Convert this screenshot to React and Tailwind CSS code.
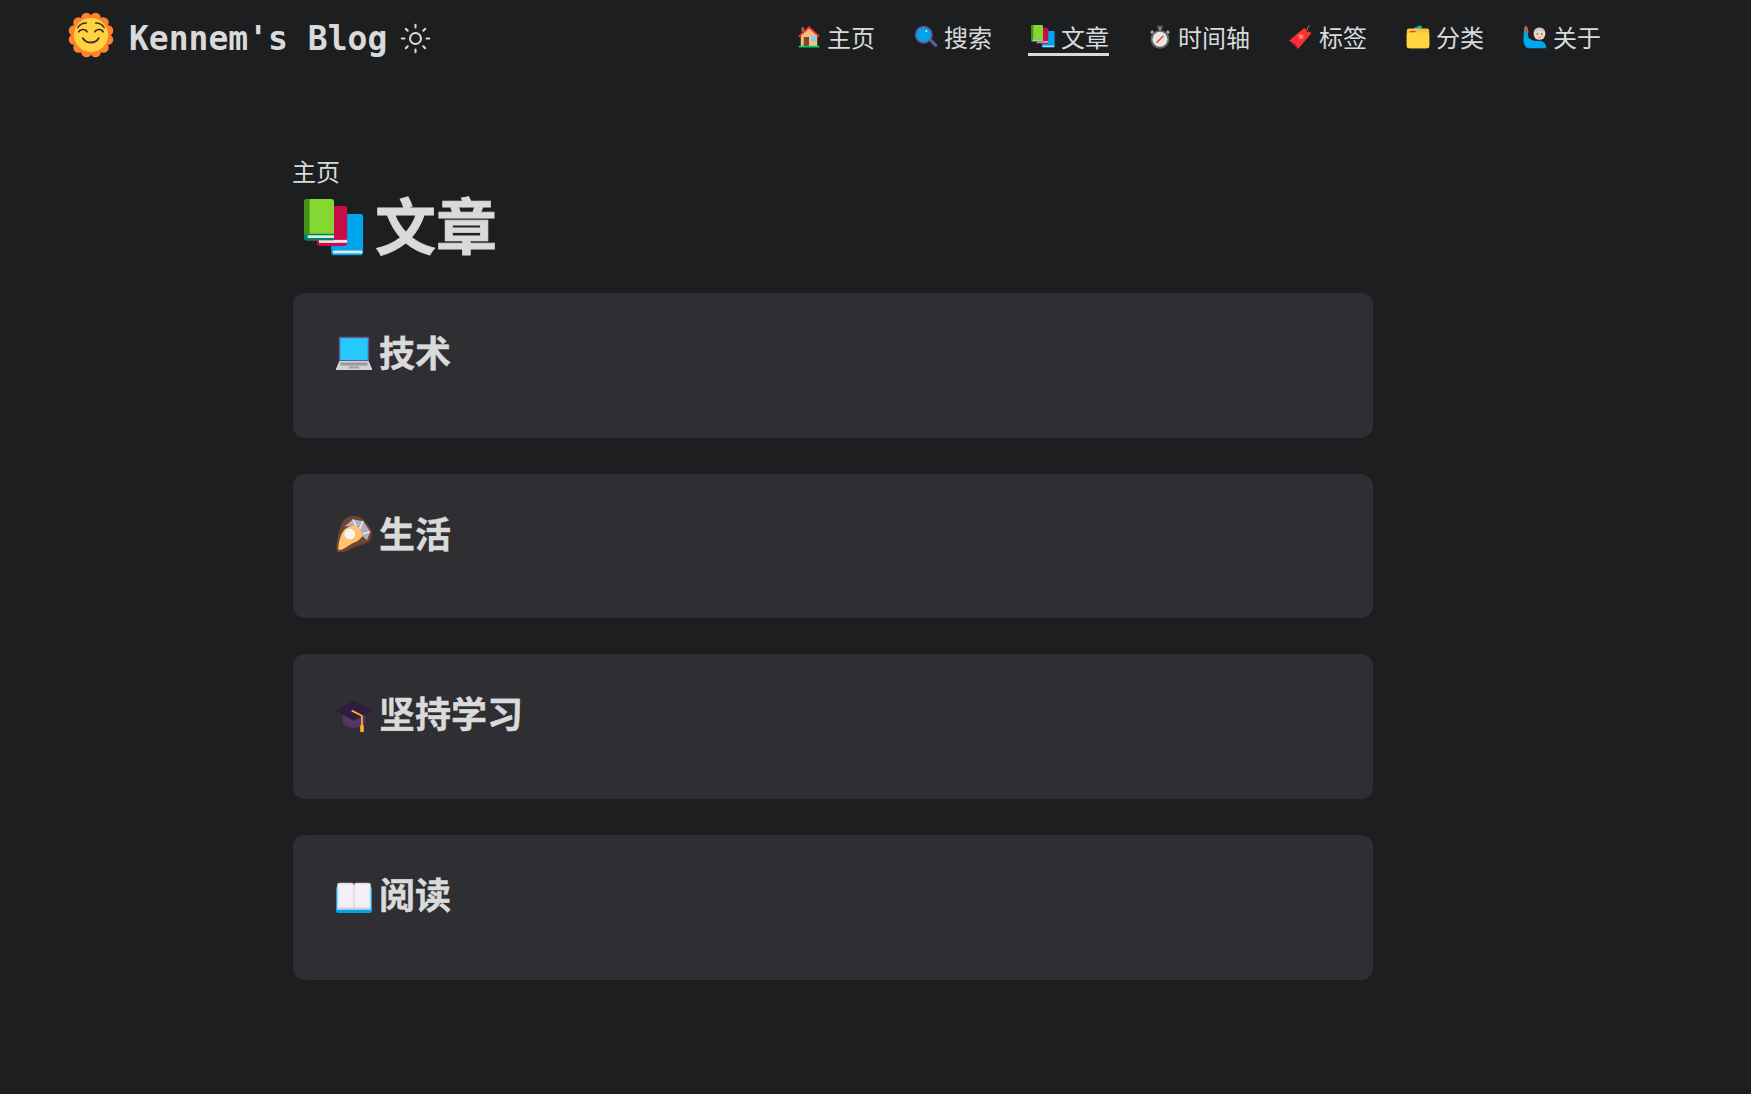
import React from "react";
import { Sun } from "lucide-react";

const cjk = { fontFamily: '"Noto Sans CJK SC", sans-serif' };

const I = ({ s = 24, children, className = "" }) => (
  <svg width={s} height={s} viewBox="0 0 32 32" fill="none" className={"shrink-0 " + className}>{children}</svg>
);

const SunFace = ({ s }) => (
  <I s={s}>
    {Array.from({ length: 12 }).map((_, i) => {
      const a = (i * Math.PI) / 6 + Math.PI / 12;
      return <circle key={i} cx={16 + 12.2 * Math.cos(a)} cy={16 + 12.2 * Math.sin(a)} r="3.7" fill="#FF822D" />;
    })}
    <circle cx="16" cy="16" r="13" fill="#FF822D" />
    <circle cx="16" cy="16" r="11.9" fill="#FFD33D" />
    <path d="M6.800 10.900C8 8.900 10.500 7.700 12.800 7.700M25.200 10.900C24 8.900 21.500 7.700 19.200 7.700" stroke="#402A32" strokeWidth="1" strokeLinecap="round" />
    <path d="M7.500 13.800c1-2.200 4.800-2.200 5.800 0M18.700 13.800c1-2.200 4.800-2.200 5.800 0" stroke="#402A32" strokeWidth="1.100" strokeLinecap="round" />
    <path d="M10.400 18.200c2.500 4 8.500 4 10.900 0" stroke="#402A32" strokeWidth="1.300" strokeLinecap="round" />
  </I>
);

const House = ({ s }) => (
  <I s={s}>
    <path d="M5 13L16 4l11 9v15H5z" fill="#F3C07B" />
    <path d="M2.500 15.500L16 3l13.500 12.500" stroke="#F8312F" strokeWidth="2.400" />
    <rect x="6" y="3" width="3.500" height="6" fill="#A56953" />
    <rect x="9" y="16" width="7" height="12" fill="#7D4533" />
    <rect x="19" y="15" width="6.500" height="6.500" fill="#83CBFF" />
    <rect x="2" y="27.500" width="28" height="2.500" rx="1.200" fill="#00D26A" />
  </I>
);

const Magnifier = ({ s }) => (
  <I s={s}>
    <path d="M20 21l3-3 7.500 7.500a2.100 2.100 0 01-3 3z" fill="#635994" />
    <circle cx="13" cy="13" r="12" fill="#635994" />
    <circle cx="13" cy="13" r="9.600" fill="#00A6ED" />
    <circle cx="16.500" cy="8" r="1.300" fill="#F4F4F4" />
  </I>
);

const Books = ({ s }) => (
  <I s={s}>
    <rect x="14.500" y="8" width="17" height="22" rx="1.300" fill="#00A6ED" />
    <rect x="15.500" y="27.500" width="15.500" height="1.500" fill="#E6E6E6" />
    <rect x="7" y="3.700" width="16" height="21.300" rx="1.300" fill="#CA0B4A" />
    <rect x="8" y="21.800" width="15" height="1.600" fill="#E6E6E6" />
    <rect x="0" y="0" width="16" height="22" rx="1.500" fill="#86D72F" />
    <path d="M0 1.500A1.500 1.500 0 011.500 0H3v18.500H0z" fill="#44911B" />
    <path d="M0 18.500h16v1H2v1.200h14V22H1.500A1.500 1.500 0 010 20.500z" fill="#008463" />
    <rect x="2" y="19.400" width="14" height="1.400" fill="#E6E6E6" />
  </I>
);

const Stopwatch = ({ s }) => (
  <I s={s}>
    <rect x="12.500" y="1" width="7" height="4" rx="1" fill="#636363" />
    <rect x="14.500" y="4" width="3" height="4" fill="#9B9B9B" />
    <path d="M2.500 9.500l3-3 3 3-3 3zM29.500 9.500l-3-3-3 3 3 3z" fill="#9B9B9B" />
    <circle cx="16" cy="19" r="12.500" fill="#636363" />
    <circle cx="16" cy="19" r="10" fill="#E6E6E6" />
    <path d="M12 23l8-8" stroke="#F8312F" strokeWidth="2" strokeLinecap="round" />
  </I>
);

const Ticket = ({ s }) => (
  <I s={s}>
    <path d="M0 21L20 4l10 7-18 21-3.500-6.500z" fill="#F8312F" />
    <path d="M0 21l8.500 4.500L12 32z" fill="#CA0B4A" />
    <path d="M16 10.500l1.400 3 3.200.300-2.400 2.200.700 3.200-2.900-1.700-2.900 1.700.700-3.200-2.400-2.200 3.200-.300z" fill="#FF8687" />
    <path d="M24.500 7C24 3 26 1 28 1" stroke="#D3883E" strokeWidth="1.200" />
    <circle cx="25" cy="8" r="1.300" fill="#1D1E20" />
  </I>
);

const Folder = ({ s }) => (
  <I s={s}>
    <rect x="15" y="1" width="6" height="4" rx="1.500" fill="#00D26A" />
    <rect x="11" y="3" width="8" height="4" rx="1" fill="#00A6ED" />
    <rect x="1" y="4.500" width="30" height="26.500" rx="3" fill="#F9C23C" />
    <rect x="1" y="10" width="30" height="21" rx="3" fill="#FFD53D" />
    <rect x="5" y="8" width="8" height="1.800" rx=".9" fill="#F8312F" />
  </I>
);

const Person = ({ s }) => (
  <I s={s}>
    <path d="M2 4c2-1 4 0 4.500 2L7 16c2 3 5 4 8 5h8c4 1 8 4 8 10H7c-3 0-6-4-6.500-11L1 9z" fill="#00A6ED" />
    <path d="M1.500 6c0-3 1-5 2.500-5s1 2 2.500 3l1 6H2z" fill="#A56953" />
    <circle cx="22" cy="12" r="7.800" fill="#F3D5C4" />
    <path d="M14.200 11c0-5 3.800-7.800 7.800-7.800s7.800 2.800 7.800 7.800c-2-3-4-4-7.800-4s-5.800 1-7.800 4z" fill="#CDC4D6" />
    <circle cx="19" cy="12" r="1" fill="#402A32" />
    <circle cx="25" cy="12" r="1" fill="#402A32" />
    <path d="M20 16.500h4" stroke="#D67D6B" strokeWidth="1" />
  </I>
);

const Laptop = ({ s }) => (
  <I s={s}>
    <rect x="2.500" y="1.500" width="27" height="22" rx="1" fill="#635994" />
    <rect x="3.800" y="2.800" width="24.400" height="19.400" fill="#26C9FC" />
    <path d="M3 23h26l3 7v1H0v-1z" fill="#D3D3D3" />
    <rect x="4" y="24.400" width="24" height="2.800" fill="#9B9B9B" />
    <rect x="11.500" y="28" width="9" height="1.800" fill="#9B9B9B" />
  </I>
);

const Oyster = ({ s }) => (
  <I s={s}>
    <path d="M1 32C-1 28 2 12 6 5c3-4 6-5 9-5 4 0 8 1 10 4 3 3 6 7 7 10 0 4-1 7-3 9-4 2-9 3-13 5-4 2-11 6-15 4z" fill="#6D4534" />
    <path d="M7.600 9L15 3l9 1.500 6.500 9.500-3 7.500-4-3.500L18 9z" fill="#B4ACBC" />
    <path d="M15 3l3 6M24 4.500l-3 7M30 14l-6 2" stroke="#E6E6E6" strokeWidth="1.500" />
    <path d="M2 30C2 24 4 16 7.500 12c3-3 8-4 10.500-3 3 2 6 6 5.500 9-2 3-5 5-8.500 6-4 2-9 7-12 6z" fill="#FFC36E" />
    <circle cx="12.200" cy="16" r="4.800" fill="#F4F4F4" />
  </I>
);

const Cap = ({ s }) => (
  <I s={s}>
    <path d="M6 14h20v10c-3 3-7 4.500-10 4.500S9 27 6 24z" fill="#533566" />
    <path d="M0 13L16 4l16 9-16 9z" fill="#321B41" />
    <path d="M14 13l9 4.500V27" stroke="#FFB02E" strokeWidth="1.500" />
    <rect x="21.500" y="25" width="3.200" height="7.500" rx="1.600" fill="#FFB02E" />
  </I>
);

const Book = ({ s }) => (
  <I s={s}>
    <path d="M0 9h32v21a2 2 0 01-2 2H18l-1 1.500h-2L14 32H2a2 2 0 01-2-2z" fill="#00A6ED" />
    <path d="M1 7a2 2 0 012-2h11a2 2 0 012 2 2 2 0 012-2h11a2 2 0 012 2v22H1z" fill="#D3D3D3" />
    <path d="M2 7a1 1 0 011-1h10a2.500 2.500 0 012.500 2.500V27L2 27z" fill="#F3EEF8" />
    <path d="M30 7a1 1 0 00-1-1H19a2.500 2.500 0 00-2.500 2.500V27L30 27z" fill="#F3EEF8" />
  </I>
);

const nav = [
  { t: "主页", I: House },
  { t: "搜索", I: Magnifier },
  { t: "文章", I: Books, active: true },
  { t: "时间轴", I: Stopwatch },
  { t: "标签", I: Ticket },
  { t: "分类", I: Folder },
  { t: "关于", I: Person },
];

const cards = [
  { t: "技术", I: Laptop },
  { t: "生活", I: Oyster },
  { t: "坚持学习", I: Cap },
  { t: "阅读", I: Book },
];

export default function App() {
  return (
    <div className="min-h-screen bg-[#1d1e20] text-[#dadadb]" style={cjk}>
      <header className="flex items-center justify-between h-[76px] pl-[68px] pr-[150px]">
        <div className="flex items-center">
          <span className="mb-[6px]"><SunFace s={46} /></span>
          <span className="ml-[15px] text-[33px] font-bold leading-none whitespace-pre" style={{ fontFamily: '"DejaVu Sans Mono", monospace' }}>Kennem's Blog</span>
          <Sun size={33} strokeWidth={1.500} className="ml-[12px]" />
        </div>
        <nav className="flex items-center gap-9">
          {nav.map((n) => (
            <a key={n.t} className={"flex items-center h-[35px] text-2xl leading-none border-b-[3px] " + (n.active ? "border-[#dadadb]" : "border-transparent")}>
              <span className="flex justify-start w-[33px] pl-[3px]"><n.I s={24} /></span>
              <span>{n.t}</span>
            </a>
          ))}
        </nav>
      </header>
      <main className="ml-[293px] w-[1080px] pt-[81px] pb-[114px]">
        <div className="text-2xl leading-[28px] h-[28px] -ml-px">主页</div>
        <h1 className="flex items-center mt-[7px] h-[62px] text-[61px] font-bold leading-none [-webkit-text-stroke:0.8px]">
          <span className="w-[82px] pl-[11px] pt-[12px]"><Books s={60} /></span>
          <span>文章</span>
        </h1>
        <div className="flex flex-col gap-[36px] mt-[39px]">
          {cards.map((c) => (
            <section key={c.t} className="h-[144.67px] rounded-xl bg-[#2e2e33] pt-[38px] pl-[43px]">
              <h2 className="flex items-center text-4xl font-bold leading-[36px] [-webkit-text-stroke:0.4px]">
                <span className="w-[43px] pt-[4px]"><c.I s={36} /></span>
                <span>{c.t}</span>
              </h2>
            </section>
          ))}
        </div>
      </main>
    </div>
  );
}
